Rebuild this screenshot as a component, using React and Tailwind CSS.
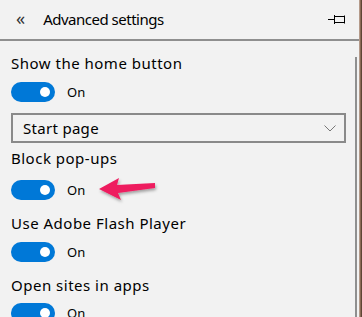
import React from "react";

const Toggle = () => (
    <div className="flex items-center h-[20px]">
        <div className="w-[44px] h-[20px] rounded-full bg-[#0078d7] flex items-center justify-end pr-[5px]">
            <div className="w-[10px] h-[10px] rounded-full bg-white" />
        </div>
        <span className="ml-[12px] text-[13px] text-black leading-none">On</span>
    </div>
);

const Label = ({ children }) => (
    <div className="text-[15px] leading-[20px] tracking-[0.5px] text-black">{children}</div>
);

const Arrow = () => (
    <svg width="64" height="32" viewBox="0 0 64 32" className="ml-[12px] -my-[6px]">
        <defs>
            <filter id="sh" x="-20%" y="-40%" width="140%" height="180%">
                <feDropShadow dx="1" dy="2" stdDeviation="1.5" floodColor="#000" floodOpacity="0.35" />
            </filter>
        </defs>
        <path
            d="M2 15 L22 4 L20 11 L58 9 L58 14 L21 19 L24 26 Z"
            fill="#ee1c5f"
            filter="url(#sh)"
        />
    </svg>
);

export default function App() {
    return (
        <div
            className="w-[362px] h-[317px] bg-[#f2f2f2] flex overflow-hidden"
            style={{ fontFamily: '"Noto Sans", "Open Sans", sans-serif' }}
        >
            <div className="w-[359px] flex flex-col">
                {/* header */}
                <div className="h-[39px] shrink-0 flex items-center border-b-2 border-[#8f8f8f] box-content">
                    <span className="ml-[16px] text-[18px] leading-none text-[#333] -mt-[3px]">«</span>
                    <span className="ml-[18px] text-[15px] tracking-[-0.5px] text-black">Advanced settings</span>
                    <svg width="18" height="10" viewBox="0 0 18 10" className="ml-auto mr-[13px]" fill="none" stroke="#000" strokeWidth="1">
                        <path d="M0 4.5h6 M6.5 0v9 M6.5 1.5h10 M6.5 7.5h10 M16.5 0.5v8" />
                    </svg>
                </div>

                <div className="flex flex-1 min-h-0">
                    <div className="flex-1 pl-[11px] pr-[9px] pt-[12px] flex flex-col">
                        <Label>Show the home button</Label>
                        <div className="mt-[9px]">
                            <Toggle />
                        </div>
                        <div className="mt-[11px] h-[30px] shrink-0 border-2 border-[#8a8a8a] flex items-center pl-[10px] pr-[8px]">
                            <span className="text-[15px] tracking-[0.3px] text-black">Start page</span>
                            <svg width="12" height="7" viewBox="0 0 12 7" className="ml-auto" fill="none" stroke="#777" strokeWidth="1">
                                <path d="M0.5 0.5 L6 6 L11.5 0.5" />
                            </svg>
                        </div>
                        <div className="mt-[5px]">
                            <Label>Block pop-ups</Label>
                        </div>
                        <div className="mt-[12px] flex items-center">
                            <Toggle />
                            <Arrow />
                        </div>
                        <div className="mt-[13px]">
                            <Label>Use Adobe Flash Player</Label>
                        </div>
                        <div className="mt-[9px]">
                            <Toggle />
                        </div>
                        <div className="mt-[13px]">
                            <Label>Open sites in apps</Label>
                        </div>
                        <div className="mt-[8px]">
                            <Toggle />
                        </div>
                    </div>
                    <div className="w-[2px] bg-[#8f8f8f] mt-[16px] mr-[2px]" />
                </div>
            </div>
            <div className="w-[3px] h-full bg-gradient-to-r from-[#c9b3a5] via-[#8a6a55] to-[#4a3426]" />
        </div>
    );
}
